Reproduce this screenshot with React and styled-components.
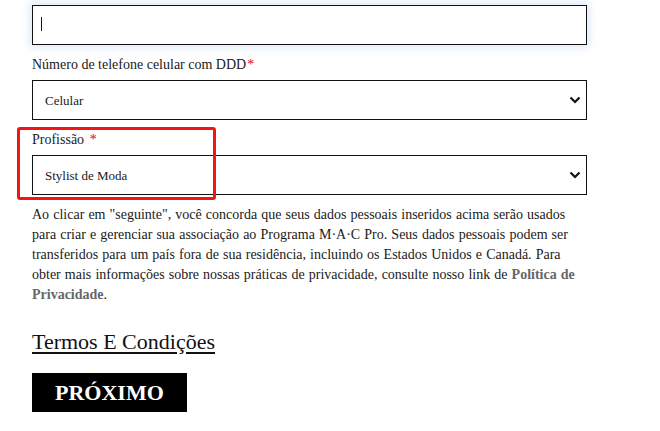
import React from 'react';
import styled, { createGlobalStyle } from 'styled-components';

const GlobalStyle = createGlobalStyle`
  html, body {
    margin: 0;
    padding: 0;
    background: #ffffff;
  }
  body {
    font-family: Georgia, "Liberation Serif", "DejaVu Serif", serif;
    color: #1a1a1a;
  }
`;

const chevron =
  "data:image/svg+xml;utf8,<svg xmlns='http://www.w3.org/2000/svg' width='12' height='8' viewBox='0 0 12 8'><path d='M1.5 1.5 L6 6 L10.5 1.5' fill='none' stroke='%23111' stroke-width='2.2'/></svg>";

const Form = styled.form`
  width: 555px;
  padding: 5px 0 20px 32px;
  display: flex;
  flex-direction: column;
`;

const Field = styled.div`
  position: relative;
  display: flex;
  flex-direction: column;
  gap: 5px;
  margin-bottom: ${(props) => props.$spacing || '10px'};
`;

const Label = styled.label`
  font-size: 14px;
  line-height: 20px;
`;

const Required = styled.span`
  color: #e4002b;
  margin-left: ${(props) => props.$gap || '1px'};
`;

const InputWrap = styled.div`
  position: relative;
`;

const TextInput = styled.input`
  box-sizing: border-box;
  width: 100%;
  height: 40px;
  border: 1.5px solid #111;
  border-radius: 0;
  outline: none;
  padding: 0 12px;
  font: inherit;
  font-size: 13px;
  box-shadow: 0 0 8px 2px rgba(120, 170, 230, 0.28);
`;

const Caret = styled.span`
  position: absolute;
  left: 9px;
  top: 12px;
  width: 1px;
  height: 14px;
  background: #111;
`;

const Select = styled.select`
  box-sizing: border-box;
  width: 100%;
  height: 40px;
  border: 1.5px solid #111;
  border-radius: 0;
  background: #fff url("${chevron}") no-repeat right 5px center;
  appearance: none;
  padding: 0 30px 0 12px;
  font-family: inherit;
  font-size: 13px;
  color: #1a1a1a;
  outline: none;
`;

const Highlight = styled.div`
  position: absolute;
  left: -15px;
  top: -3px;
  width: 199px;
  height: 73px;
  box-sizing: border-box;
  border: 3px solid #f21515;
  border-radius: 3px;
  pointer-events: none;
`;

const Notice = styled.p`
  margin: 0 0 25px;
  font-size: 14px;
  line-height: 20px;
  word-spacing: 0.6px;
`;

const PolicyLink = styled.a`
  color: #666666;
  font-weight: bold;
  text-decoration: none;
`;

const TermsLink = styled.a`
  align-self: flex-start;
  font-size: 22px;
  line-height: 24px;
  color: #111;
  text-decoration: underline;
  text-underline-offset: 3px;
  margin-bottom: 19px;
`;

const NextButton = styled.button`
  align-self: flex-start;
  height: 39px;
  padding: 0 23px;
  background: #000;
  color: #fff;
  border: none;
  border-radius: 0;
  font-family: inherit;
  font-size: 22px;
  font-weight: bold;
  cursor: pointer;
`;

export default function App() {
  return (
    <>
      <GlobalStyle />
      <Form onSubmit={(e) => e.preventDefault()}>
        <Field $spacing="10px">
          <InputWrap>
            <TextInput type="text" />
            <Caret />
          </InputWrap>
        </Field>

        <Field>
          <Label>
            Número de telefone celular com DDD<Required>*</Required>
          </Label>
          <Select defaultValue="celular">
            <option value="celular">Celular</option>
          </Select>
        </Field>

        <Field>
          <Label>
            Profissão <Required $gap="2px">*</Required>
          </Label>
          <Select defaultValue="stylist">
            <option value="stylist">Stylist de Moda</option>
          </Select>
          <Highlight />
        </Field>

        <Notice>
          Ao clicar em "seguinte", você concorda que seus dados pessoais
          inseridos acima serão usados para criar e gerenciar sua associação ao
          Programa M·A·C Pro. Seus dados pessoais podem ser transferidos para um
          país fora de sua residência, incluindo os Estados Unidos e Canadá.
          Para obter mais informações sobre nossas práticas de privacidade,
          consulte nosso link de{' '}
          <PolicyLink href="#">Política de Privacidade</PolicyLink>.
        </Notice>

        <TermsLink href="#">Termos E Condições</TermsLink>

        <NextButton type="button">PRÓXIMO</NextButton>
      </Form>
    </>
  );
}
